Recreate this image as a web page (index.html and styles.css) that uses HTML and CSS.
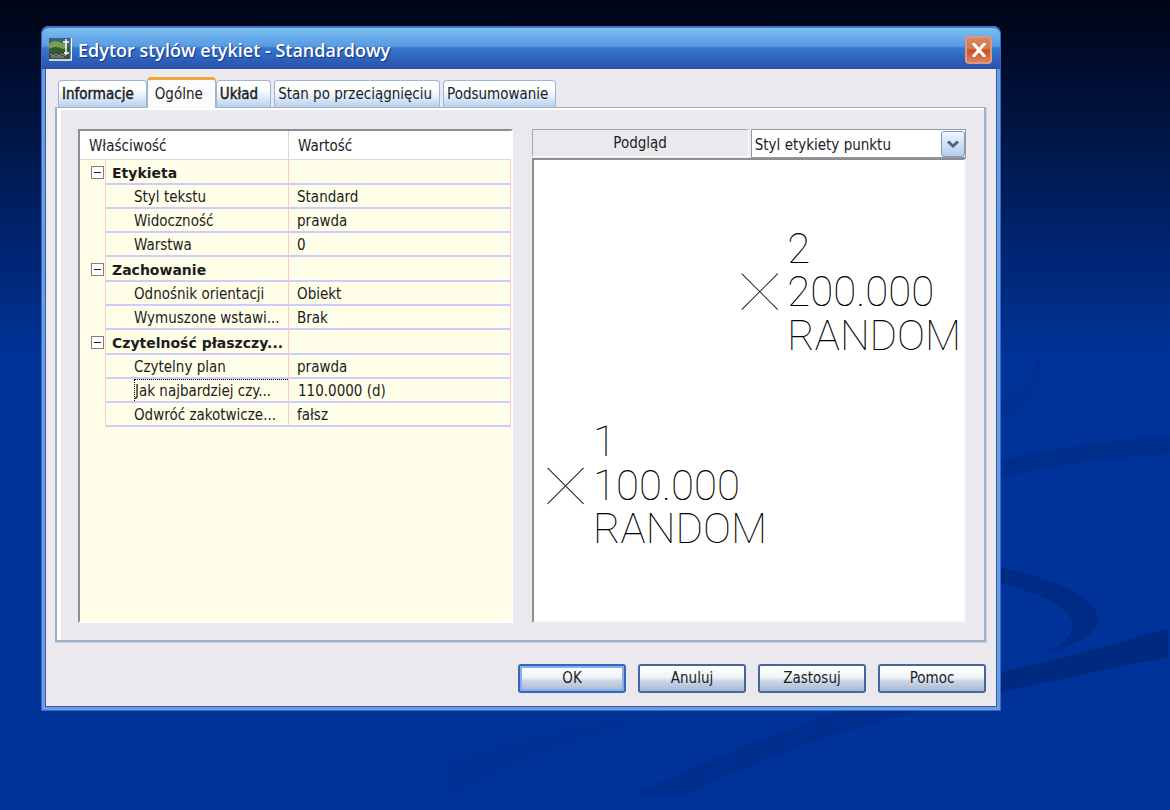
FILE: index.html
```html
<!DOCTYPE html>
<html lang="pl">
<head>
  <meta charset="UTF-8" />
  <meta name="viewport" content="width=device-width, initial-scale=1.0" />
  <title>Edytor stylów etykiet - Standardowy</title>
  <link rel="stylesheet" href="styles.css">
</head>
<body>
  <svg class="wallpaper" viewBox="0 0 1170 810" preserveAspectRatio="none" aria-hidden="true">
    <path d="M1030 330 Q1062 380 1003 418 L1003 400 Q1054 376 1030 330 Z" fill="#002c88" opacity=".4" />
    <path d="M1003 459 Q1080 444 1170 435 L1170 454 Q1080 459 1003 477 Z" fill="#002c88" opacity=".7" />
    <path d="M1000 568 C1080 582 1150 625 1046 653 C1085 634 1090 606 1000 583 Z" fill="#002b85" />
    <path d="M990 675 Q1080 655 1168 628 L1168 657 Q1080 674 990 695 Z" fill="#002a80" />
    <path d="M850 708 Q740 745 635 794 L690 794 Q790 742 930 708 Z" fill="#002c88" opacity=".6" />
    <path d="M680 708 Q560 725 447 762 L447 798 Q520 755 680 708 Z" fill="#002f92" opacity=".5" />
  </svg>

  <main class="desktop">
    <div class="window">
      <div class="titlebar">
        <svg class="app-icon" viewBox="0 0 23 23" aria-hidden="true">
          <rect width="23" height="23" fill="#39657a" />
          <path d="M0 6 Q5 1 10 4 T18 5 V14 H0 Z" fill="#7c9c52" />
          <path d="M0 11 Q6 7 14 11 L20 9 V15 H0 Z" fill="#315b30" />
          <path d="M0 14 H20 V22 H0 Z" fill="#3c5040" />
          <path d="M1 16 L4 18 L7 16 L10 18 L13 16 L17 18 M2 19 H15" stroke="#8d9a8c" fill="none" />
          <path d="M0 22 H22.500 V0 M17 1 V17 M14 4 H20 M15 15 H20" stroke="#fff" stroke-width="1.500" fill="none" />
        </svg>
        <h1>Edytor stylów etykiet - Standardowy</h1>
        <button class="close" aria-label="Zamknij">
          <svg viewBox="0 0 14 14" aria-hidden="true"><path d="M1 0 L13 14 M13 0 L1 14" stroke="#fff" stroke-width="3" /></svg>
        </button>
      </div>

      <div class="content">
        <div class="tabs">
          <button class="tab strong">Informacje</button>
          <button class="tab active">Ogólne</button>
          <button class="tab strong">Układ</button>
          <button class="tab">Stan po przeciągnięciu</button>
          <button class="tab">Podsumowanie</button>
        </div>

        <div class="panel">
          <div class="list">
            <table>
              <colgroup>
                <col class="col-gutter">
                <col class="col-name">
                <col>
              </colgroup>
              <thead>
                <tr><th colspan="2">Właściwość</th><th>Wartość</th></tr>
              </thead>
              <tbody>
                <tr class="category"><td class="gutter"><button class="toggle" aria-label="Zwiń"></button></td><td>Etykieta</td><td></td></tr>
                <tr><td class="gutter"></td><td>Styl tekstu</td><td>Standard</td></tr>
                <tr><td class="gutter"></td><td>Widoczność</td><td>prawda</td></tr>
                <tr><td class="gutter"></td><td>Warstwa</td><td>0</td></tr>
                <tr class="category"><td class="gutter"><button class="toggle" aria-label="Zwiń"></button></td><td>Zachowanie</td><td></td></tr>
                <tr><td class="gutter"></td><td>Odnośnik orientacji</td><td>Obiekt</td></tr>
                <tr><td class="gutter"></td><td>Wymuszone wstawi...</td><td>Brak</td></tr>
                <tr class="category"><td class="gutter"><button class="toggle" aria-label="Zwiń"></button></td><td>Czytelność płaszczy...</td><td></td></tr>
                <tr><td class="gutter"></td><td>Czytelny plan</td><td>prawda</td></tr>
                <tr class="focused"><td class="gutter"></td><td><span>Jak najbardziej czy...</span></td><td>110.0000 (d)</td></tr>
                <tr><td class="gutter"></td><td>Odwróć zakotwicze...</td><td>fałsz</td></tr>
              </tbody>
            </table>
          </div>

          <div class="preview">
            <div class="preview-head">
              <label for="labelStyle">Podgląd</label>
              <div class="select-box">
                <select id="labelStyle">
                  <option>Styl etykiety punktu</option>
                </select>
                <span class="arrow"><svg viewBox="0 0 12 8" aria-hidden="true"><path d="M1 1.500 L6 6 L11 1.500" fill="none" stroke="#4d6185" stroke-width="3" /></svg></span>
              </div>
            </div>
            <svg class="drawing" viewBox="0 0 430 460">
              <g class="cross">
                <path d="M207.500 113.500 L243.500 149.500 M243.500 113.500 L207.500 149.500" />
                <path d="M13.500 307.500 L49.500 343.500 M49.500 307.500 L13.500 343.500" />
              </g>
              <text x="253" y="103">2</text>
              <text x="253" y="146">200.000</text>
              <text x="253" y="190">RANDOM</text>
              <text x="59" y="296">1</text>
              <text x="59" y="340">100.000</text>
              <text x="59" y="383">RANDOM</text>
            </svg>
          </div>
        </div>

        <div class="actions">
          <button class="btn default">OK</button>
          <button class="btn">Anuluj</button>
          <button class="btn">Zastosuj</button>
          <button class="btn">Pomoc</button>
        </div>
      </div>
    </div>
  </main>
</body>
</html>
```
FILE: styles.css
```css
* {
  box-sizing: border-box;
}

body {
  margin: 0;
  font-family: "DejaVu Sans Condensed", "DejaVu Sans", sans-serif;
  font-stretch: condensed;
  font-size: 15px;
  line-height: 20px;
  color: #1c1c1c;
  background: #003399 linear-gradient(#000414, #003399 44%) no-repeat;
  min-height: 100vh;
}

button, select {
  font: inherit;
  color: inherit;
  cursor: pointer;
}

svg {
  display: block;
}

.wallpaper {
  position: absolute;
  top: 0;
  left: 0;
  width: 100%;
  height: 100%;
}

.desktop {
  position: relative;
  display: flex;
  min-height: 100vh;
  padding: 26px 169px 100px 41px;
}

.window {
  flex: 1;
  display: flex;
  flex-direction: column;
  background: #ebe9ed;
  border: 1px solid #3a68c0;
  border-top: 0;
  border-radius: 8px 8px 0 0;
  box-shadow: inset 0 0 0 3px #6a9ede, inset 0 0 0 4px #2f5cb4;
  padding: 0 4px 4px;
}

/* title bar */
.titlebar {
  display: flex;
  align-items: center;
  gap: 6px;
  height: 43px;
  margin: 0 -4px;
  padding: 3px 8px 0 7px;
  border-top: 2px solid #4374c8;
  border-bottom: 1px solid #274da8;
  border-radius: 8px 8px 0 0;
  background: linear-gradient(#7fc0ee, #66aaea 25%, #5a9ae2 45%, #3478cc 50%, #3068c0 70%, #2a52ac);
}

.titlebar h1 {
  flex: 1;
  margin: 0;
  font-family: "Open Sans", sans-serif;
  font-stretch: normal;
  font-size: 18px;
  font-weight: 600;
  color: #fff;
  text-shadow: 1px 1px 1px #10308c;
}

.app-icon {
  width: 23px;
  height: 23px;
}

.close {
  display: flex;
  align-items: center;
  justify-content: center;
  width: 27px;
  height: 28px;
  padding: 0;
  border: 2px solid #e0957e;
  border-radius: 4px;
  background: linear-gradient(#d88560, #d47850 45%, #cc4f20 50%, #dc8060);
}

.close svg {
  width: 14px;
  height: 14px;
}

.content {
  flex: 1;
  display: flex;
  flex-direction: column;
  padding: 8px 10px 13px 9px;
}

/* tabs */
.tabs {
  display: flex;
  align-items: flex-end;
  gap: 3px;
  padding-left: 3px;
}

.tab {
  height: 27px;
  padding: 0 7px 1px 3px;
  border: 1px solid #9fb4d2;
  border-bottom: 0;
  border-radius: 4px 4px 0 0;
  background: linear-gradient(#fff 30%, #e4eefb 60%, #b8cfec);
  white-space: nowrap;
}

.tab.strong {
  padding-right: 12px;
  -webkit-text-stroke: 0.4px #1c1c1c;
}

.tab.active {
  position: relative;
  height: 31px;
  margin: 0 -3px -1px;
  padding: 0 12px 1px 7px;
  border-top: 3px solid #f0a83c;
  background: #fbfafc;
}

.panel {
  flex: 1;
  display: grid;
  grid-template-columns: 1fr 1fr;
  gap: 19px;
  padding: 21px 18px 17px 21px;
  border: 2px solid #9cb0c8;
  border-top-width: 1px;
  box-shadow: inset 4px 2px #fff, 1px 1px #d0d2da;
}

/* property list */
.list {
  background: #ffffe9;
  border: 2px solid #8e8e92;
  border-right-color: #fff;
  border-bottom-color: #fff;
}

table {
  width: 100%;
  table-layout: fixed;
  border-collapse: separate;
  border-spacing: 0;
}

.col-gutter {
  width: 26px;
}

.col-name {
  width: 183px;
}

th {
  height: 29px;
  padding: 2px 9px 0;
  text-align: left;
  font-weight: normal;
  background: #fff;
  border-bottom: 1px solid #dcdad2;
}

th:first-child {
  border-right: 1px solid #d8d8d8;
}

td {
  height: 24px;
  padding: 2px 0 0 8px;
  white-space: nowrap;
  border-right: 1px solid #ffc8c8;
  border-bottom: 2px solid #ccccff;
}

td:nth-child(2) {
  padding-left: 28px;
}

td.gutter {
  padding: 0 0 0 11px;
  border-bottom: 0;
}

.category td {
  height: 25px;
  font-family: "DejaVu Sans", sans-serif;
  font-stretch: normal;
  font-size: 14px;
  font-weight: bold;
}

.category td:nth-child(2) {
  padding-left: 6px;
}

.focused td {
  padding-top: 0;
}

.focused span {
  display: block;
  height: 22px;
  line-height: 22px;
  border-top: 1px dotted #000;
  border-left: 1px dotted #000;
}

.focused td:last-child {
  padding: 2px 0 0 9px;
}

.toggle {
  display: block;
  width: 13px;
  height: 13px;
  padding: 0;
  border: 1px solid #808080;
  background: linear-gradient(#222, #222) center / 7px 1px no-repeat #fff;
}

/* preview */
.preview {
  display: flex;
  flex-direction: column;
}

.preview-head {
  display: flex;
  gap: 2px;
}

.preview-head label {
  flex: 1;
  height: 28px;
  line-height: 26px;
  text-align: center;
  border: 1px solid #a8a8ac;
  border-right-color: #fff;
  border-bottom-color: #fff;
}

.select-box {
  position: relative;
  flex: 1;
}

.select-box select {
  display: block;
  appearance: none;
  width: 100%;
  height: 29px;
  padding: 2px 28px 0 3px;
  border: 1px solid #9a9a9e;
  border-radius: 0;
  background: #fff;
}

.arrow {
  position: absolute;
  top: 2px;
  right: 1px;
  display: flex;
  align-items: center;
  justify-content: center;
  width: 24px;
  height: 26px;
  border: 1px solid #7f9cc4;
  border-radius: 3px;
  background: linear-gradient(#eef5fe, #b4cdee);
  pointer-events: none;
}

.arrow svg {
  width: 12px;
  height: 8px;
}

.drawing {
  flex: 1;
  width: 100%;
  background: #fff;
  border: 2px solid #8e8e92;
  border-right-color: #f4f4f6;
  border-bottom-color: #f4f4f6;
}

.drawing text {
  font-family: Roboto, sans-serif;
  font-stretch: normal;
  font-size: 42px;
  font-weight: 100;
}

.cross {
  stroke: #222;
  fill: none;
}

/* buttons */
.actions {
  display: flex;
  justify-content: flex-end;
  gap: 12px;
  padding-top: 22px;
}

.btn {
  width: 108px;
  height: 29px;
  padding: 0;
  border: 2px solid #44689e;
  border-radius: 3px;
  background: linear-gradient(#fff, #f0f4f8 45%, #ccd6e6 60%, #a8b8d0);
}

.btn.default {
  border-color: #3566ba;
  box-shadow: inset 0 0 0 2px #86b0ea;
}
```
